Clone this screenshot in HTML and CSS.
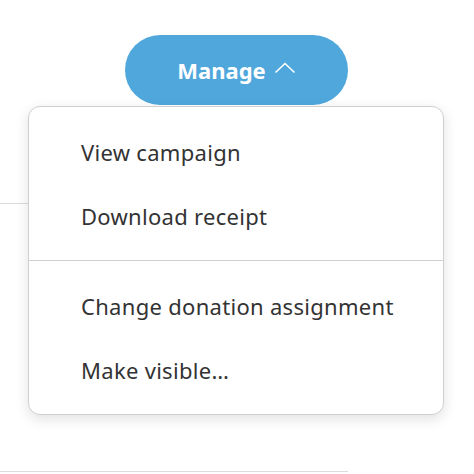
FILE: index.html
```html
<!DOCTYPE html>
<html>
<head>
<meta charset="utf-8">
<link rel="stylesheet" href="styles.css">
</head>
<body>
<div class="page">
  <div class="column">
    <div class="row row-top">
      <button class="manage"><span class="label">Manage</span>
        <svg class="chev" width="22" height="12" viewBox="0 0 22 12"><path d="M1.5 10.5 L11 1.5 L20.5 10.5" fill="none" stroke="#fff" stroke-width="1.6"/></svg>
      </button>
    </div>
    <div class="row row-bottom"></div>
  </div>
  <div class="menu">
    <ul class="group">
      <li class="item">View campaign</li>
      <li class="item">Download receipt</li>
    </ul>
    <ul class="group">
      <li class="item">Change donation assignment</li>
      <li class="item">Make visible…</li>
    </ul>
  </div>
</div>
</body>
</html>
```
FILE: styles.css
```css
html, body {
  margin: 0;
  padding: 0;
  background: #fff;
}
body {
  font-family: "Noto Sans", "Open Sans", sans-serif;
  color: #333;
}
.page {
  position: relative;
  width: 474px;
  height: 474px;
  overflow: hidden;
}
.column {
  width: 348px;
}
.row {
  border-bottom: 1px solid #dcdcdc;
}
.row-top {
  height: 204px;
  box-sizing: border-box;
  padding-top: 35px;
  display: flex;
  justify-content: flex-end;
}
.row-bottom {
  height: 267px;
}
.manage {
  width: 223px;
  height: 70px;
  border: none;
  border-radius: 35px;
  background: #4fa7dc;
  color: #fff;
  font-family: inherit;
  font-weight: 700;
  font-size: 22px;
  display: flex;
  align-items: center;
  justify-content: center;
  gap: 8px;
  padding: 0;
}
.label {
  line-height: 1;
}
.chev {
  margin-top: -4px;
}
.menu {
  position: absolute;
  left: 28px;
  top: 106px;
  width: 416px;
  box-sizing: border-box;
  background: #fff;
  border: 1px solid #cfcfcf;
  border-radius: 12px;
  box-shadow: 0 4px 14px rgba(0,0,0,0.12);
}
.group {
  list-style: none;
  margin: 0;
  padding: 13px 0 12px;
}
.group + .group {
  border-top: 1px solid #cfcfcf;
}
.item {
  height: 64px;
  line-height: 64px;
  padding-left: 52px;
  font-size: 22px;
  letter-spacing: 0.3px;
  color: #333;
}
```
